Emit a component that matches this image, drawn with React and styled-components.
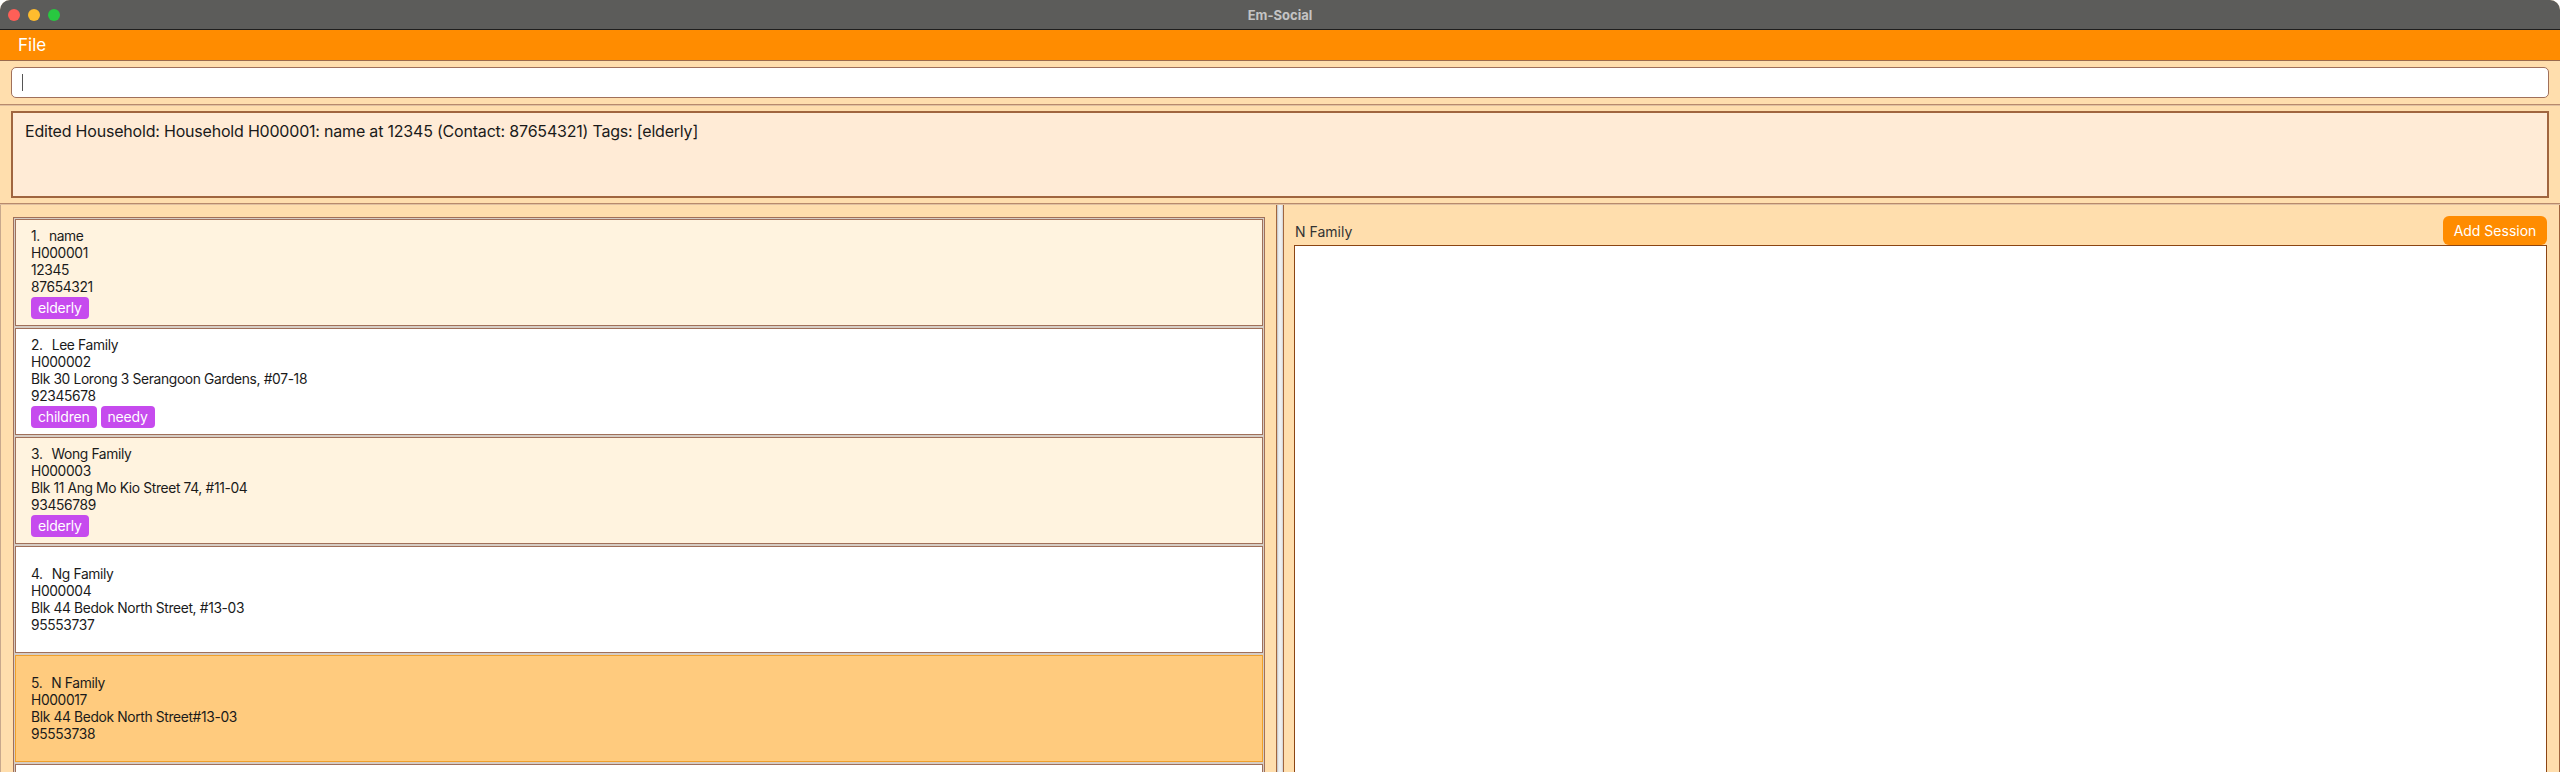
import React from 'react';
import styled, { createGlobalStyle } from 'styled-components';

const GlobalStyle = createGlobalStyle`
  html, body {
    margin: 0;
    padding: 0;
    background: #ffffff;
  }
  body {
    font-family: Inter, "Noto Sans", "Liberation Sans", sans-serif;
    color: #1a1a1a;
  }
  * {
    box-sizing: border-box;
  }
`;

const households = [
  { name: 'name', id: 'H000001', address: '12345', phone: '87654321', tags: ['elderly'] },
  {
    name: 'Lee Family',
    id: 'H000002',
    address: 'Blk 30 Lorong 3 Serangoon Gardens, #07-18',
    phone: '92345678',
    tags: ['children', 'needy']
  },
  {
    name: 'Wong Family',
    id: 'H000003',
    address: 'Blk 11 Ang Mo Kio Street 74, #11-04',
    phone: '93456789',
    tags: ['elderly']
  },
  { name: 'Ng Family', id: 'H000004', address: 'Blk 44 Bedok North Street, #13-03', phone: '95553737', tags: [] },
  { name: 'N Family', id: 'H000017', address: 'Blk 44 Bedok North Street#13-03', phone: '95553738', tags: [] }
];

const SELECTED = 4;

function App() {
  return (
    <>
      <GlobalStyle />
      <Window>
        <TitleBar>
          <Lights>
            <Light color="#fe5f57" />
            <Light color="#febc2e" />
            <Light color="#28c840" />
          </Lights>
          <Title>Em-Social</Title>
        </TitleBar>

        <MenuBar>
          <MenuItem>File</MenuItem>
        </MenuBar>

        <CommandArea>
          <CommandField>
            <Caret />
          </CommandField>
        </CommandArea>

        <HDivider />

        <ResultArea>
          <ResultBox>
            Edited Household: Household H000001: name at 12345 (Contact: 87654321) Tags: [elderly]
          </ResultBox>
        </ResultArea>

        <HDivider />

        <Main>
          <ListPane>
            <HouseholdList>
              {households.map((h, i) => (
                <Card key={h.id} $odd={i % 2 === 0} $selected={i === SELECTED}>
                  <Line>
                    <Index>{i + 1}.</Index>
                    {h.name}
                  </Line>
                  <Line>{h.id}</Line>
                  <Line>{h.address}</Line>
                  <Line>{h.phone}</Line>
                  {h.tags.length > 0 && (
                    <Tags>
                      {h.tags.map(t => (
                        <Tag key={t}>{t}</Tag>
                      ))}
                    </Tags>
                  )}
                </Card>
              ))}
              <Card $odd={false} />
            </HouseholdList>
          </ListPane>

          <VDivider />

          <SessionPane>
            <SessionHeader>
              <SessionLabel>N Family</SessionLabel>
              <AddButton>Add Session</AddButton>
            </SessionHeader>
            <SessionBox />
          </SessionPane>
        </Main>
      </Window>
    </>
  );
}

export default App;

const Window = styled.div`
  height: 100vh;
  display: flex;
  flex-direction: column;
  overflow: hidden;
  background: #ffdead;
  border-radius: 10px 10px 0 0;
`;

const TitleBar = styled.div`
  position: relative;
  height: 30px;
  flex: none;
  background: #5c5c5a;
  border-bottom: 1px solid #1e1e1e;
  display: flex;
  align-items: center;
  justify-content: center;
`;

const Lights = styled.div`
  position: absolute;
  left: 8px;
  top: 9px;
  display: flex;
  gap: 8px;
`;

const Light = styled.span`
  width: 12px;
  height: 12px;
  border-radius: 50%;
  background: ${p => p.color};
`;

const Title = styled.div`
  font-family: Inter, "Liberation Sans", sans-serif;
  font-size: 13px;
  font-weight: 700;
  color: #c4c4c4;
`;

const MenuBar = styled.div`
  height: 31px;
  flex: none;
  background: #ff8c00;
  border-bottom: 1px solid #9a6a4c;
  display: flex;
  align-items: center;
  padding-left: 18px;
`;

const MenuItem = styled.span`
  color: #ffffff;
  font-size: 17px;
`;

const CommandArea = styled.div`
  height: 43px;
  flex: none;
  padding: 6px 11px;
  background: #ffdead;
`;

const CommandField = styled.div`
  height: 31px;
  background: #ffffff;
  border: 1px solid #a0705a;
  border-radius: 5px;
  display: flex;
  align-items: center;
  padding-left: 10px;
`;

const Caret = styled.span`
  width: 1px;
  height: 17px;
  background: #555;
`;

const HDivider = styled.div`
  height: 2px;
  flex: none;
  background: #b88a6c;
  border-bottom: 1px solid #e0c0a0;
`;

const ResultArea = styled.div`
  height: 97px;
  flex: none;
  padding: 5px 11px 6px;
  background: #ffdead;
`;

const ResultBox = styled.div`
  height: 87px;
  background: #ffebd6;
  border: 2px solid #a0653f;
  padding: 8px 12px;
  font-size: 16px;
  letter-spacing: -0.2px;
`;

const Main = styled.div`
  flex: 1;
  min-height: 0;
  display: flex;
`;

const ListPane = styled.div`
  width: 1277px;
  flex: none;
  padding: 12px 11px 0 12px;
  border-left: 1px solid #c8a88c;
  border-right: 1px solid #a0653f;
  background: #ffdead;
  display: flex;
  flex-direction: column;
`;

const HouseholdList = styled.div`
  flex: 1;
  min-height: 0;
  overflow: hidden;
  border: 1px solid #a0705a;
  border-bottom: none;
  padding: 1px;
  background: #d6cdc5;
  display: flex;
  flex-direction: column;
  gap: 2px;
`;

const Card = styled.div`
  height: 107px;
  flex: none;
  display: flex;
  flex-direction: column;
  justify-content: center;
  padding: 1px 15px 0;
  background: ${p => (p.$selected ? '#ffcb7e' : p.$odd ? '#fff3df' : '#ffffff')};
  border: 1px solid ${p => (p.$selected ? '#f0a02a' : '#a0705a')};
  font-size: 13.8px;
  letter-spacing: -0.35px;
`;

const Line = styled.div`
  height: 17px;
  line-height: 17px;
  white-space: nowrap;
`;

const Index = styled.span`
  margin-right: 9px;
`;

const Tags = styled.div`
  display: flex;
  gap: 4px;
  margin-top: 1px;
`;

const Tag = styled.span`
  height: 22px;
  line-height: 22px;
  padding: 0 7px;
  border-radius: 4px;
  background: #c64bee;
  color: #ffffff;
  font-size: 14px;
  letter-spacing: -0.2px;
`;

const VDivider = styled.div`
  width: 6px;
  flex: none;
  background: linear-gradient(to right, #bdbdbd, #efefef 30%, #efefef 70%, #cfcfcf);
`;

const SessionPane = styled.div`
  flex: 1;
  min-width: 0;
  display: flex;
  flex-direction: column;
  padding: 11px 12px 0 10px;
  border-left: 1px solid #a0653f;
  border-right: 1px solid #a0653f;
  background: #ffdead;
`;

const SessionHeader = styled.div`
  height: 29px;
  flex: none;
  display: flex;
  align-items: center;
  justify-content: space-between;
`;

const SessionLabel = styled.span`
  font-size: 14px;
  color: #333333;
  padding-left: 1px;
  padding-top: 2px;
`;

const AddButton = styled.button`
  height: 29px;
  width: 104px;
  border: none;
  border-radius: 6px;
  background: #ff8c00;
  color: #ffffff;
  font-family: Inter, "Liberation Sans", sans-serif;
  font-size: 14px;
  padding: 0;
`;

const SessionBox = styled.div`
  flex: 1;
  background: #ffffff;
  border: 1px solid #8b4513;
  border-bottom: none;
`;
